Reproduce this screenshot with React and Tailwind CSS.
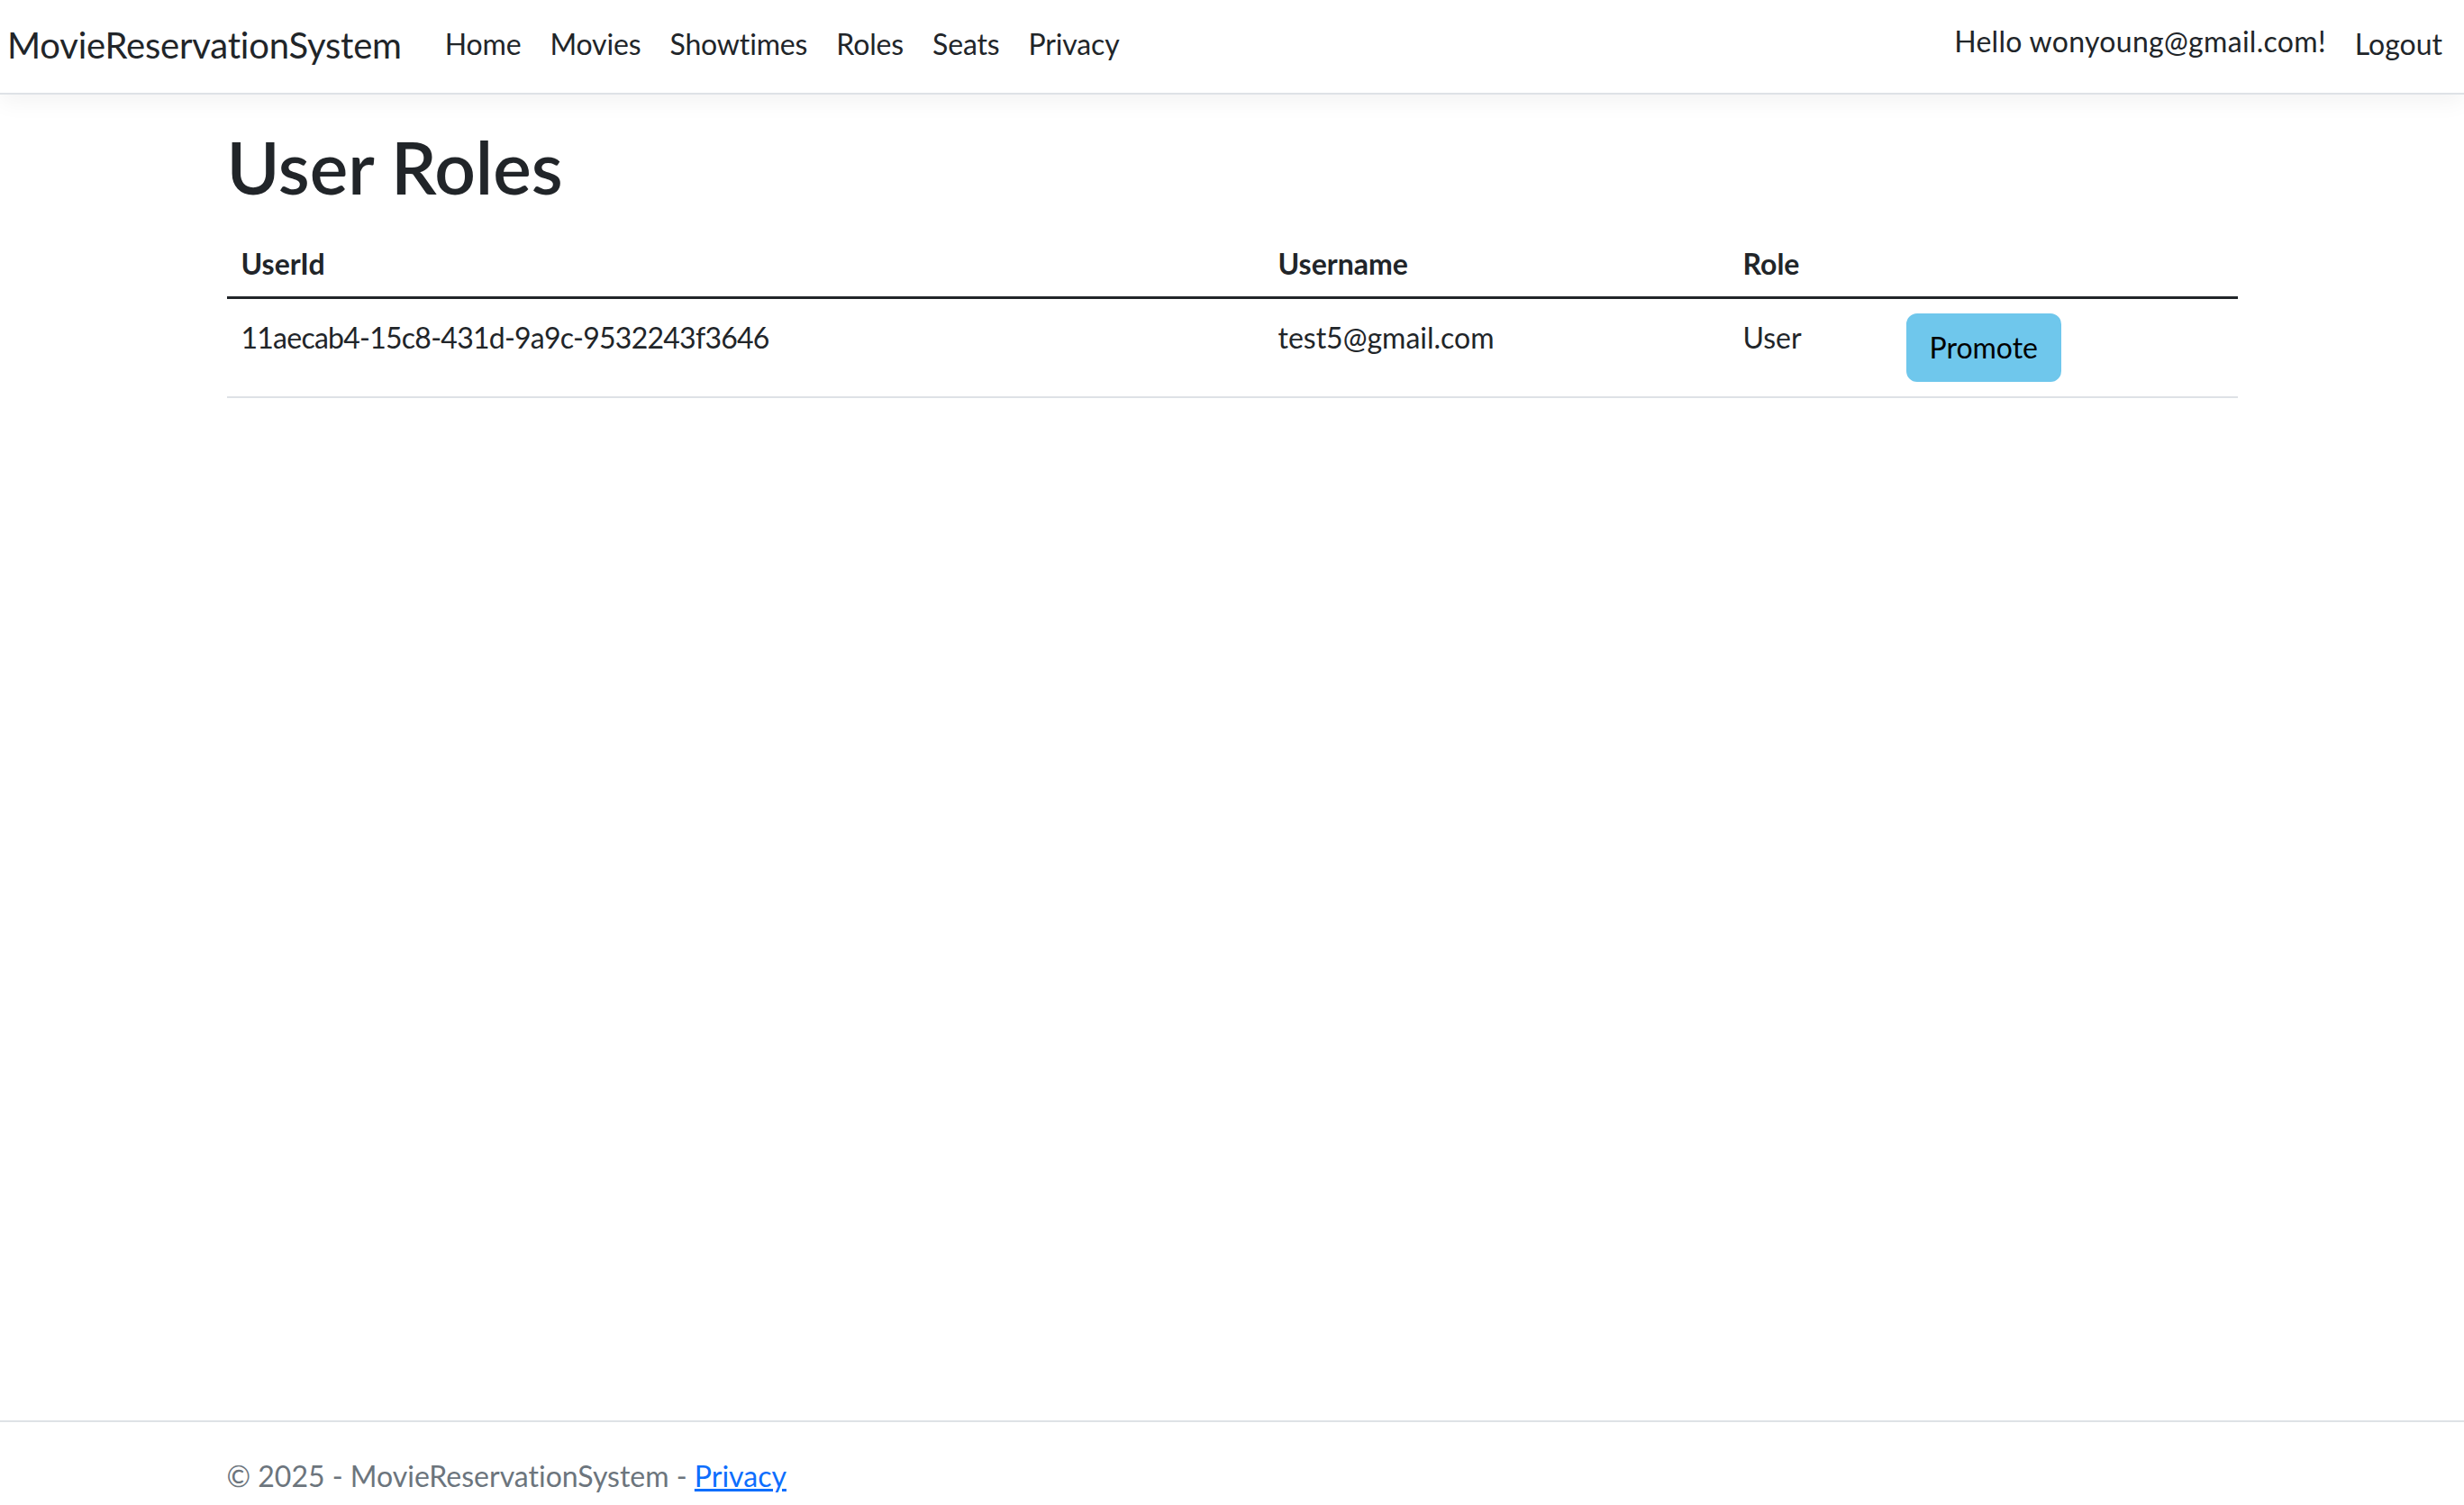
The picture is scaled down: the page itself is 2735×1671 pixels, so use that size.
import React from 'react';

const navLinks = ['Home', 'Movies', 'Showtimes', 'Roles', 'Seats', 'Privacy'];

const users = [
  { id: '11aecab4-15c8-431d-9a9c-9532243f3646', username: 'test5@gmail.com', role: 'User' },
];

export default function App() {
  return (
    <div className="h-screen flex flex-col bg-white text-[#212529] font-['Lato','Liberation_Sans',sans-serif] [font-variant-ligatures:none] overflow-hidden">
      {/* Top navbar */}
      <nav className="h-[105px] shrink-0 flex items-center justify-between px-[8px] bg-white border-b-2 border-[#dee2e6] shadow-[0_8px_24px_rgba(0,0,0,0.05)] relative z-10">
        <div className="flex items-center">
          <a className="text-[40px] leading-[60px] pt-[8px] pb-[12px] mr-[32px] text-[#212529] tracking-[-0.2px]">MovieReservationSystem</a>
          <ul className="flex items-center tracking-[-0.15px]">
            {navLinks.map((link) => (
              <li key={link}>
                <a className="block px-[16px] pt-[13px] pb-[19px] text-[32px] leading-[48px] text-[#212529]">{link}</a>
              </li>
            ))}
          </ul>
        </div>
        <ul className="flex items-center">
          <li>
            <a className="block px-[16px] pt-[10px] pb-[22px] text-[32px] leading-[48px] text-[#212529] tracking-[0.3px]">Hello wonyoung@gmail.com!</a>
          </li>
          <li>
            <button type="button" className="block px-[16px] pt-[13px] pb-[19px] text-[32px] leading-[48px] text-[#212529]">Logout</button>
          </li>
        </ul>
      </nav>

      {/* Page body */}
      <main className="flex-1 pt-[32px]">
        <div className="w-[2280px] mx-auto px-[24px]">
          <h1 className="text-[80px] leading-[96px] font-semibold mb-[16px]">User Roles</h1>
          <table className="w-full table-fixed border-collapse text-left text-[32px] leading-[48px]">
            <thead>
              <tr className="border-b-[3px] border-[#212529]">
                <th className="w-[1151px] px-[16px] pt-[20px] pb-[12px] font-bold">UserId</th>
                <th className="w-[516px] px-[16px] pt-[20px] pb-[12px] font-bold">Username</th>
                <th className="w-[181px] px-[16px] pt-[20px] pb-[12px] font-bold">Role</th>
                <th className="px-[16px] pt-[20px] pb-[12px]"></th>
              </tr>
            </thead>
            <tbody>
              {users.map((user) => (
                <tr key={user.id} className="border-b-2 border-[#dee2e6]">
                  <td className="px-[16px] pt-[19px] pb-[13px] align-top tracking-[-0.75px]">{user.id}</td>
                  <td className="px-[16px] pt-[19px] pb-[13px] align-top">{user.username}</td>
                  <td className="px-[16px] pt-[19px] pb-[13px] align-top">{user.role}</td>
                  <td className="px-[16px] py-[16px] align-top">
                    <button
                      type="button"
                      className="px-[24px] py-[12px] text-[32px] leading-[48px] text-black bg-[#6fc7ec] border-2 border-[#6fc7ec] rounded-[12px]"
                    >
                      Promote
                    </button>
                  </td>
                </tr>
              ))}
            </tbody>
          </table>
        </div>
      </main>

      {/* Footer */}
      <footer className="h-[94px] shrink-0 border-t-2 border-[#dee2e6] overflow-hidden">
        <div className="w-[2280px] mx-auto px-[24px] text-[32px] leading-[120px] whitespace-nowrap text-[#6c757d]">
          © 2025 - MovieReservationSystem - <a className="text-[#0d6efd] underline">Privacy</a>
        </div>
      </footer>
    </div>
  );
}
